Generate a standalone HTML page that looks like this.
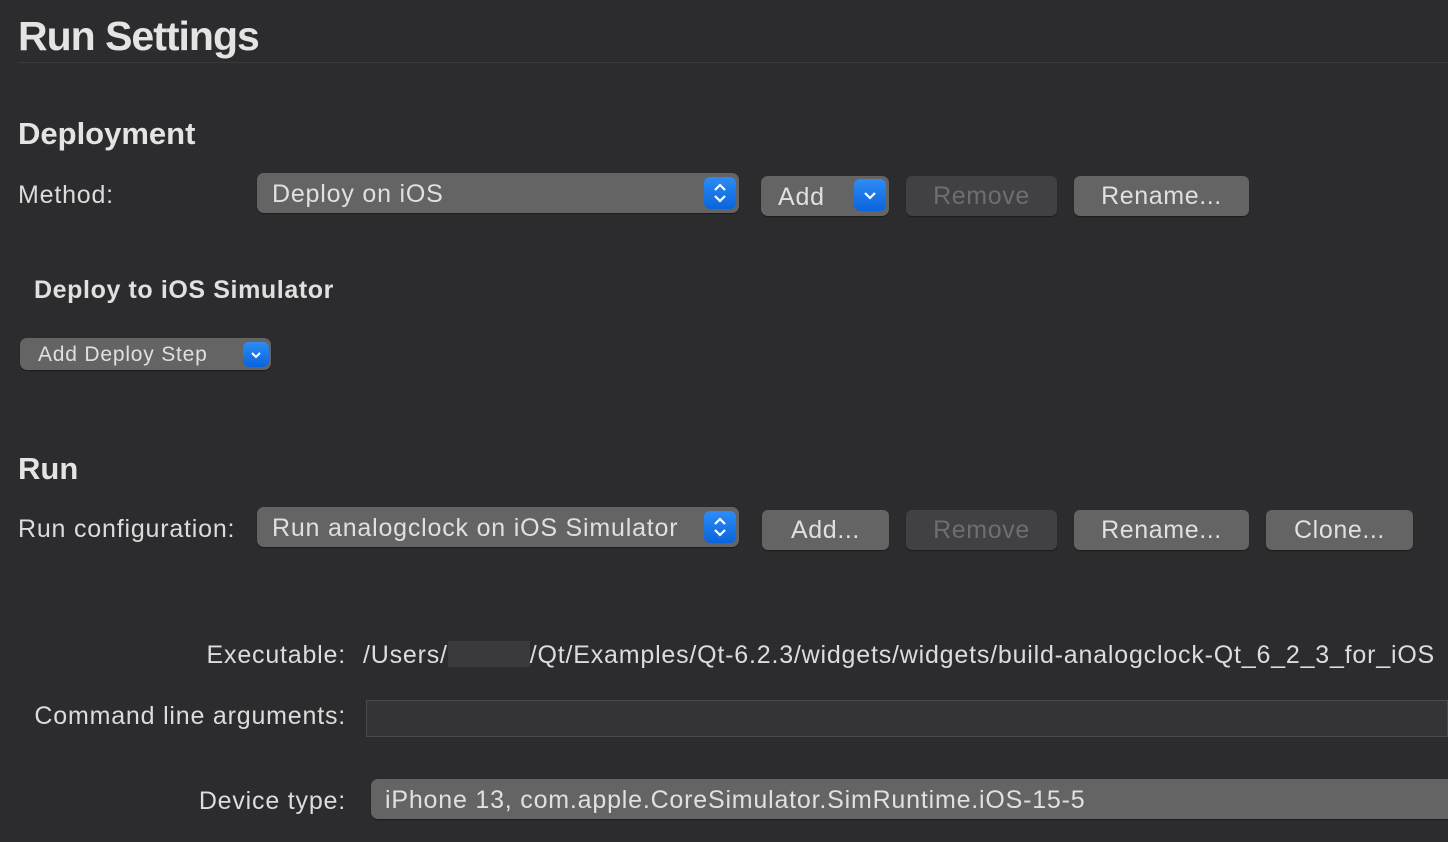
<!DOCTYPE html><html><head><style>
body{margin:0;width:1448px;height:842px;background:#2c2c2e;font-family:"Liberation Sans",sans-serif;color:#dcdcdc;position:relative;overflow:hidden}
.a{position:absolute;white-space:nowrap}
.h1{font-size:41px;font-weight:bold;letter-spacing:-1px;color:#e4e4e4}
.h2{font-size:31px;font-weight:bold;letter-spacing:0px;color:#e4e4e4}
.l{font-size:25px;letter-spacing:0.8px}
.r{right:1102px;text-align:right}
.pop{position:absolute;background:#646464;border-radius:7px;box-shadow:0 1px 1px rgba(0,0,0,.4);font-size:25px;letter-spacing:0.8px;color:#e0e0e0;box-sizing:border-box;padding-left:15px;line-height:42px;white-space:nowrap}
.btn{position:absolute;background:#646464;border-radius:6px;box-shadow:0 1px 1px rgba(0,0,0,.4);font-size:25px;letter-spacing:0.6px;color:#e0e0e0;text-align:center;line-height:40px}
.dis{background:#414143;color:#6e6e70}
.bl{position:absolute;background:linear-gradient(#2d8cf5,#0a64dc);border-radius:6px}
</style></head><body>
<div class="a h1" style="left:18px;top:13px">Run Settings</div>
<div class="a" style="left:18px;top:62px;width:1430px;height:1px;background:#3a3a3c"></div>
<div class="a h2" style="left:18px;top:116px">Deployment</div>
<div class="a l" style="left:18px;top:181px">Method:</div>
<div class="pop" style="left:257px;top:173px;width:482px;height:40px">Deploy on iOS</div>
<div class="bl" style="left:704px;top:177px;width:32px;height:32px"><svg width="32" height="32"><path d="M11 13l5-5 5 5M11 19l5 5 5-5" stroke="#fff" stroke-width="2.2" fill="none"/></svg></div>
<div class="pop" style="left:761px;top:176px;width:128px;height:40px;padding-left:17px">Add</div>
<div class="bl" style="left:854px;top:179px;width:32px;height:32px"><svg width="32" height="32"><path d="M11 14l5 5 5-5" stroke="#fff" stroke-width="2.2" fill="none"/></svg></div>
<div class="btn dis" style="left:906px;top:176px;width:151px;height:40px">Remove</div>
<div class="btn" style="left:1074px;top:176px;width:175px;height:40px">Rename...</div>
<div class="a" style="left:34px;top:276px;font-size:25px;font-weight:bold;letter-spacing:0.6px;color:#e0e0e0">Deploy to iOS Simulator</div>
<div class="pop" style="left:20px;top:338px;width:251px;height:32px;line-height:33px;font-size:21px;letter-spacing:0.8px;padding-left:18px">Add Deploy Step</div>
<div class="bl" style="left:243px;top:342px;width:26px;height:25px"><svg width="26" height="25"><path d="M9 11l4 4 4-4" stroke="#fff" stroke-width="2" fill="none"/></svg></div>
<div class="a h2" style="left:18px;top:451px">Run</div>
<div class="a l" style="left:18px;top:515px">Run configuration:</div>
<div class="pop" style="left:257px;top:507px;width:482px;height:40px">Run analogclock on iOS Simulator</div>
<div class="bl" style="left:704px;top:511px;width:32px;height:32px"><svg width="32" height="32"><path d="M11 13l5-5 5 5M11 19l5 5 5-5" stroke="#fff" stroke-width="2.2" fill="none"/></svg></div>
<div class="btn" style="left:762px;top:510px;width:127px;height:40px">Add...</div>
<div class="btn dis" style="left:906px;top:510px;width:151px;height:40px">Remove</div>
<div class="btn" style="left:1074px;top:510px;width:175px;height:40px">Rename...</div>
<div class="btn" style="left:1266px;top:510px;width:147px;height:40px">Clone...</div>
<div class="a l r" style="top:641px">Executable:</div>
<div class="a l" style="left:363px;top:641px">/Users/<span style="display:inline-block;width:82px;height:26px;background:#3a3a3c;vertical-align:-4px"></span>/Qt/Examples/Qt-6.2.3/widgets/widgets/build-analogclock-Qt_6_2_3_for_iOS</div>
<div class="a l r" style="top:702px">Command line arguments:</div>
<div class="a" style="left:366px;top:700px;width:1082px;height:37px;background:#353537;border:1px solid #4a4a4c;box-sizing:border-box"></div>
<div class="a l r" style="top:787px">Device type:</div>
<div class="pop" style="left:371px;top:779px;width:1090px;height:40px;padding-left:14px">iPhone 13, com.apple.CoreSimulator.SimRuntime.iOS-15-5</div>
</body></html>
